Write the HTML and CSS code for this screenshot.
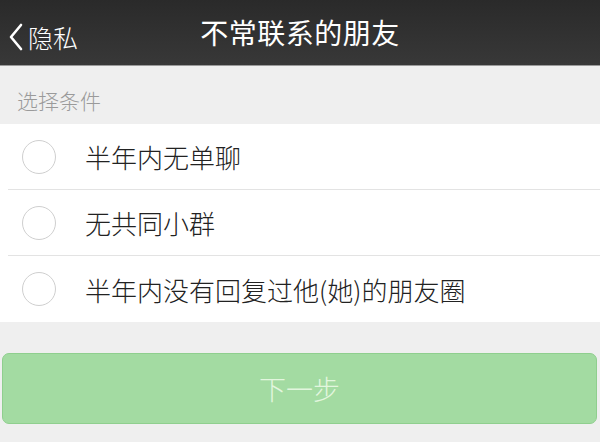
FILE: index.html
```html
<!DOCTYPE html>
<html lang="zh-CN">
<head>
    <meta charset="UTF-8">
    <title>不常联系的朋友</title>
    <link rel="stylesheet" href="styles.css">
</head>
<body>
    <div class="header">
        <a class="back" href="#">
            <svg class="chevron" width="16" height="28" viewBox="0 0 16 28">
                <path d="M13 2 L3 14 L13 26" fill="none" stroke="#fff" stroke-width="2.6" stroke-linecap="round" stroke-linejoin="round"/>
            </svg>
            <span>隐私</span>
        </a>
        <div class="title">不常联系的朋友</div>
    </div>

    <div class="section-label">选择条件</div>

    <div class="list">
        <div class="row">
            <span class="radio"></span>
            <span class="row-text">半年内无单聊</span>
        </div>
        <div class="row">
            <span class="radio"></span>
            <span class="row-text">无共同小群</span>
        </div>
        <div class="row">
            <span class="radio"></span>
            <span class="row-text">半年内没有回复过他(她)的朋友圈</span>
        </div>
    </div>

    <div class="actions">
        <button class="next-btn" disabled>下一步</button>
    </div>
</body>
</html>
```

FILE: styles.css
```css
* {
    margin: 0;
    padding: 0;
    box-sizing: border-box;
    font-family: "Noto Sans CJK SC", "Noto Sans", sans-serif;
}

body {
    width: 600px;
    height: 442px;
    background: #efefef;
    overflow: hidden;
}

.header {
    position: relative;
    height: 66px;
    background: linear-gradient(180deg, #2a2a2a, #383838);
    border-bottom: 1px solid #9a9a9a;
    display: flex;
    align-items: center;
    justify-content: center;
}

.back {
    position: absolute;
    left: 8px;
    top: 19px;
    display: flex;
    align-items: center;
    gap: 4px;
    color: #fff;
    text-decoration: none;
    font-size: 25px;
    font-weight: 300;
}

.title {
    color: #fff;
    font-size: 28px;
    margin-top: -2px;
    letter-spacing: 0.5px;
}

.section-label {
    height: 58px;
    padding: 21px 0 0 17px;
    color: #9a9a9a;
    font-size: 21px;
    line-height: 26px;
    font-weight: 300;
}

.list {
    background: #fff;
}

.row {
    height: 66px;
    display: flex;
    align-items: center;
    margin-left: 8px;
    padding-left: 14px;
    border-bottom: 1px solid #e3e3e3;
}

.row:last-child {
    border-bottom: none;
}

.radio {
    width: 34px;
    height: 34px;
    border: 1.5px solid #cfcfcf;
    border-radius: 50%;
    flex: none;
}

.row-text {
    margin-left: 29px;
    font-size: 26px;
    color: #222;
    font-weight: 300;
}

.actions {
    padding: 31px 3px 0 2px;
}

.next-btn {
    width: 100%;
    height: 71px;
    border: 1px solid #8fcf8e;
    border-radius: 7px;
    background: #a3dba2;
    color: #e2f6de;
    font-size: 27px;
    font-family: "Noto Sans CJK SC", sans-serif;
    font-weight: 300;
}
```
